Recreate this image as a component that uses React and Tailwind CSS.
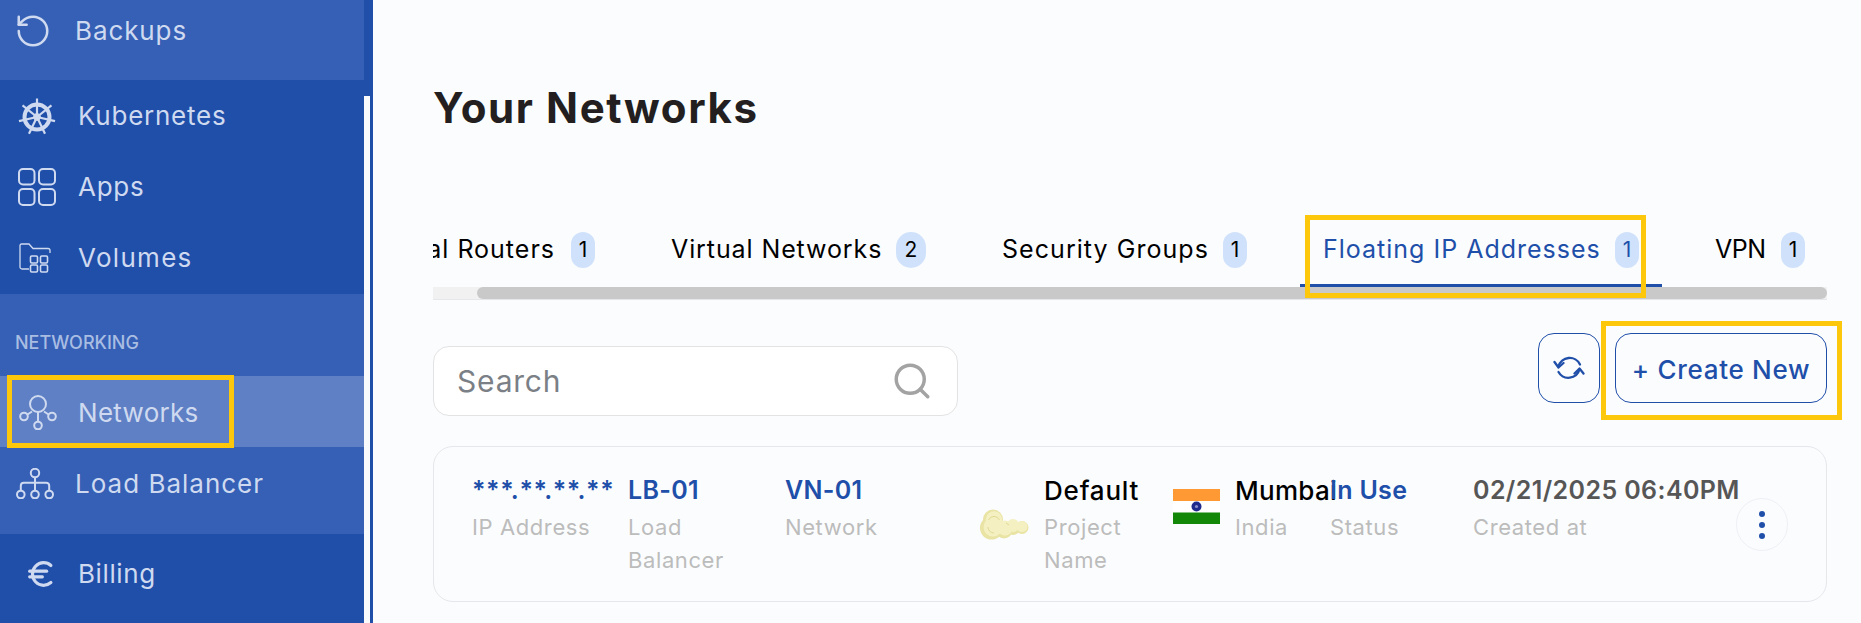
import React from "react";
import { RotateCcw, Search, Euro } from "lucide-react";

const ff = "font-['Inter',sans-serif]";

function Kube({ className }) {
  const a = [0, 51.4, 102.8, 154.3, 205.7, 257.1, 308.6];
  return (
    <svg viewBox="0 0 38 38" className={className} fill="none" stroke="currentColor">
      <circle cx="19" cy="20" r="12.5" strokeWidth="4" />
      {a.map((d) => (
        <g key={d} transform={`rotate(${d} 19 20)`}>
          <path d="M19 20V1.5" strokeWidth="2.2" />
        </g>
      ))}
      <circle cx="19" cy="20" r="3.4" fill="currentColor" strokeWidth="1" />
    </svg>
  );
}
function Apps({ className }) {
  return (
    <svg viewBox="0 0 38 38" className={className} fill="none" stroke="currentColor" strokeWidth="2">
      <rect x="1" y="1" width="15.5" height="15.5" rx="4" />
      <rect x="21" y="1" width="16" height="15.5" rx="4" />
      <rect x="1" y="21" width="15.5" height="16" rx="4" />
      <rect x="21" y="21" width="16" height="16" rx="4" />
    </svg>
  );
}
function Volumes({ className }) {
  return (
    <svg viewBox="0 0 32 30" className={className} fill="none" stroke="currentColor" strokeWidth="1.3">
      <path d="M10 26H3a2 2 0 0 1-2-2V2.5A1.5 1.5 0 0 1 2.5 1H10l4 4.5h15a2 2 0 0 1 2 2V10" />
      <rect x="11.5" y="13" width="7" height="7" rx="1.2" strokeWidth="1.6" />
      <rect x="21.5" y="13" width="7" height="7" rx="1.2" strokeWidth="1.6" />
      <rect x="11.5" y="22" width="7" height="7" rx="1.2" strokeWidth="1.6" />
      <rect x="21.5" y="22" width="7" height="7" rx="1.2" strokeWidth="1.6" />
    </svg>
  );
}
function Net({ className }) {
  return (
    <svg viewBox="0 0 38 35" className={className} fill="none" stroke="currentColor" strokeWidth="2">
      <circle cx="19" cy="9" r="8" />
      <circle cx="5" cy="21.5" r="3.8" />
      <circle cx="33" cy="21.5" r="3.8" />
      <circle cx="19" cy="30.5" r="3.8" />
      <path d="M19 17v9.5M8.5 19.5l4.5-3M29.5 19.5l-4.5-3" />
    </svg>
  );
}
function Lb({ className }) {
  return (
    <svg viewBox="0 0 38 31" className={className} fill="none" stroke="currentColor" strokeWidth="2">
      <circle cx="19" cy="5" r="4.2" />
      <circle cx="4.8" cy="26.5" r="3.8" />
      <circle cx="19" cy="26.5" r="3.8" />
      <circle cx="33.2" cy="26.5" r="3.8" />
      <path d="M19 9.2v13.5M4.8 22.7v-5a3 3 0 0 1 3-3h22.4a3 3 0 0 1 3 3v5" />
    </svg>
  );
}
function Refresh({ className }) {
  return (
    <svg viewBox="0 0 32 28" className={className} fill="none" stroke="currentColor" strokeWidth="2.3" strokeLinecap="round" strokeLinejoin="round">
      <path d="M27 10.5A11.5 11.5 0 0 0 5.5 12.5" />
      <path d="M1.5 8l4 5.5L10.5 9" />
      <path d="M5.5 18A11.5 11.5 0 0 0 26.5 15.5" />
      <path d="M21.5 19.5l5-5 4 5" />
    </svg>
  );
}
function Cloud({ className }) {
  return (
    <svg viewBox="0 0 51 31" className={className}>
      <g fill="#e9e3a4">
        <circle cx="12.5" cy="19" r="11.5" />
        <circle cx="14" cy="10.5" r="10" />
        <circle cx="25" cy="21" r="8.5" />
        <circle cx="34" cy="19" r="7" />
        <circle cx="43" cy="18.5" r="6.5" />
      </g>
      <g fill="#f4f0c2">
        <circle cx="14" cy="18" r="9.5" />
        <circle cx="15" cy="10.5" r="8.2" />
        <circle cx="26" cy="19" r="7.5" />
        <circle cx="34" cy="16.5" r="6.5" />
        <circle cx="43" cy="17.5" r="5.5" />
      </g>
      <path d="M9 18a6 6 0 0 0 6 6M9.5 11a6 6 0 0 1 11 0M27 14l3 2" fill="none" stroke="#e0d993" strokeWidth="1" />
    </svg>
  );
}
function Flag({ className }) {
  return (
    <svg viewBox="0 0 47 35" className={className}>
      <rect width="47" height="12" fill="#ff9933" />
      <rect y="12" width="47" height="11.5" fill="#ffffff" />
      <rect y="23.5" width="47" height="11.5" fill="#138808" />
      <circle cx="23.5" cy="17.5" r="5" fill="#1e2a8c" />
      <circle cx="23.5" cy="17.5" r="1.6" fill="#8a90cc" />
    </svg>
  );
}

function Row({ icon, label, iconBox = "w-[78px] pl-[18px]", tracking = "tracking-[0.75px]" }) {
  return (
    <div className="relative flex h-[71px] items-center">
      <div className={`flex shrink-0 items-center ${iconBox}`}>{icon}</div>
      <span className={`whitespace-nowrap text-[26px] text-[#cfdaf0] ${tracking}`}>{label}</span>
    </div>
  );
}

function Tab({ label, count, textW, active, clip, track = "tracking-[0.9px]" }) {
  return (
    <div className={`relative flex h-[72px] shrink-0 items-center border-b-[3px] px-[23px] ${active ? "border-[#204fa9]" : "border-transparent"}`}>
      <span className={`whitespace-nowrap text-[25px] ${track} ${active ? "text-[#204fa9]" : "text-black"} ${clip ? "flex justify-end" : ""}`} style={{ width: textW }}>
        {label}
      </span>
      <span className={`ml-[16px] flex h-[36px] items-center justify-center rounded-full bg-[#d0e2fb] text-[21px] ${count === "2" ? "w-[30px]" : "w-[24px]"} ${active ? "text-[#204fa9]" : "text-black"}`}>
        {count}
      </span>
    </div>
  );
}

function Col({ value, label, w, color = "text-[#204fa9]", size = "text-[25px] font-semibold", track = "tracking-[0.3px]", labelW = "" }) {
  return (
    <div className="shrink-0" style={{ width: w }}>
      <div className={`h-[37px] whitespace-nowrap leading-[37px] ${size} ${color} ${track}`}>{value}</div>
      <div className={`mt-[2px] text-[22px] leading-[33px] tracking-[0.6px] text-[#bcbcbc] ${labelW}`}>{label}</div>
    </div>
  );
}

export default function App() {
  return (
    <div className={`flex h-[623px] w-full overflow-hidden bg-[#fbfcfe] ${ff}`}>
      <aside className="relative w-[364px] shrink-0 bg-[#204fa9]">
        <div className="h-[80px] bg-[#3660b5]">
          <div className="flex h-[58px] items-center pt-[3px]">
            <div className="w-[75px] shrink-0 pl-[14px]"><RotateCcw className="h-[38px] w-[38px] text-[#cfdaf0]" strokeWidth={1.6} /></div>
            <span className="text-[26px] tracking-[0.9px] text-[#cfdaf0]">Backups</span>
          </div>
        </div>
        <div className="h-[214px]">
          <Row icon={<Kube className="h-[38px] w-[38px] text-[#cfdaf0]" />} label="Kubernetes" />
          <Row icon={<Apps className="h-[38px] w-[38px] text-[#cfdaf0]" />} label="Apps" />
          <Row icon={<Volumes className="h-[30px] w-[32px] text-[#cfdaf0]" />} label="Volumes" iconBox="w-[78px] pl-[19px]" tracking="tracking-[1.3px]" />
        </div>
        <div className="h-[240px] bg-[#3660b5]">
          <div className="flex h-[82px] items-end pb-[20px] pl-[15px] text-[18px] font-medium text-[#a9bde3]">NETWORKING</div>
          <div className="relative flex h-[71px] items-center bg-[#5f80c4] pt-[2px]">
            <div className="w-[78px] shrink-0 pl-[19px]"><Net className="h-[35px] w-[38px] text-[#cfdaf0]" /></div>
            <span className="text-[26px] tracking-[0.3px] text-[#cfdaf0]">Networks</span>
            <div className="absolute left-[7px] top-[-1px] h-[73px] w-[227px] border-[5px] border-[#fdc70c]" />
          </div>
          <div className="flex h-[71px] items-center pt-[2px]">
            <div className="w-[75px] shrink-0 pl-[16px]"><Lb className="h-[31px] w-[38px] text-[#cfdaf0]" /></div>
            <span className="text-[26px] tracking-[1px] text-[#cfdaf0]">Load Balancer</span>
          </div>
        </div>
        <div className="pt-[4px]">
          <Row icon={<Euro className="h-[34px] w-[34px] text-[#cfdaf0]" strokeWidth={2.2} />} label="Billing" iconBox="w-[78px] pl-[24px]" tracking="tracking-[0.6px]" />
        </div>
      </aside>

      <div className="flex w-[9px] shrink-0 flex-col bg-[#204fa9] pr-[3px]">
        <div className="mt-[96px] flex-1 bg-[#f8fafc]" />
      </div>

      <main className="box-content flex w-[1394px] shrink-0 flex-col pl-[60px]">
        <h1 className="flex h-[215px] items-start pt-[84px] text-[42px] font-bold leading-[48px] tracking-[1.6px] text-[#231f20]">Your Networks</h1>

        <div className="relative">
          <div className="overflow-hidden">
            <div className="ml-[-84px] flex gap-[30px]">
              <Tab label="Virtual Routers" count="1" textW={183} clip track="tracking-[1px]" />
              <Tab label="Virtual Networks" count="2" textW={209} />
              <Tab label="Security Groups" count="1" textW={205} track="tracking-[1.05px]" />
              <Tab label="Floating IP Addresses" count="1" textW={276} active track="tracking-[1px]" />
              <Tab label="VPN" count="1" textW={50} track="tracking-[-0.5px]" />
            </div>
          </div>
          <div className="h-[13px] border-b border-[#e5e7eb] bg-[#f1f1f1]">
            <div className="ml-[44px] h-[12px] rounded-full bg-[#c9c9c9]" />
          </div>
          <div className="absolute left-[872px] top-[0px] h-[83px] w-[341px] border-[5px] border-[#fdc70c]" />
        </div>

        <div className="mt-[33px] flex items-start justify-between">
          <div className="mt-[13px] flex h-[70px] w-[525px] items-center justify-between rounded-[16px] border border-[#e3e3e3] bg-white pl-[23px] pr-[24px]">
            <span className="text-[30px] tracking-[0.8px] text-[#7b7f86]">Search</span>
            <Search className="h-[42px] w-[42px] text-[#a3a3a3]" strokeWidth={2} />
          </div>
          <div className="flex gap-[15px]">
            <button className="flex h-[70px] w-[62px] items-center justify-center rounded-[16px] border border-[#204fa9] text-[#204fa9]">
              <Refresh className="h-[28px] w-[32px]" />
            </button>
            <div className="relative">
              <button className="flex h-[70px] w-[212px] items-center justify-center whitespace-nowrap rounded-[16px] border border-[#204fa9] pt-[3px] text-[26px] font-medium tracking-[0.7px] text-[#204fa9]">
                + Create New
              </button>
              <div className="absolute left-[-14px] top-[-12px] h-[99px] w-[241px] border-[5px] border-[#fdc70c]" />
            </div>
          </div>
        </div>

        <div className="mt-[30px] flex h-[156px] rounded-[20px] border border-[#e5e7eb] pl-[38px] pt-[25px]">
          <Col w={156} value="***.**.**.**" label="IP Address" track="tracking-[0.6px]" />
          <Col w={157} value="LB-01" label="Load Balancer" labelW="max-w-[110px]" />
          <Col w={193} value="VN-01" label="Network" />
          <div className="w-[66px] shrink-0 pl-px pt-[37px]"><Cloud className="h-[31px] w-[51px]" /></div>
          <Col w={128} value="Default" label="Project Name" labelW="max-w-[110px]" color="text-black" size="text-[26px] font-medium" track="tracking-[0.8px]" />
          <div className="w-[63px] shrink-0 pl-px pt-[17px]"><Flag className="h-[35px] w-[47px]" /></div>
          <Col w={95} value="Mumbai" label="India" color="text-black" size="text-[26px] font-medium" />
          <Col w={143} value="In Use" label="Status" />
          <Col w={263} value="02/21/2025 06:40PM" label="Created at" color="text-[#565656]" track="tracking-[0.4px]" />
          <div className="mt-[26px] flex h-[53px] w-[52px] shrink-0 flex-col items-center justify-center gap-[5px] rounded-full border border-[#eef0f5]">
            <span className="h-[6px] w-[6px] rounded-full bg-[#204fa9]" />
            <span className="h-[6px] w-[6px] rounded-full bg-[#204fa9]" />
            <span className="h-[6px] w-[6px] rounded-full bg-[#204fa9]" />
          </div>
        </div>
      </main>
    </div>
  );
}
